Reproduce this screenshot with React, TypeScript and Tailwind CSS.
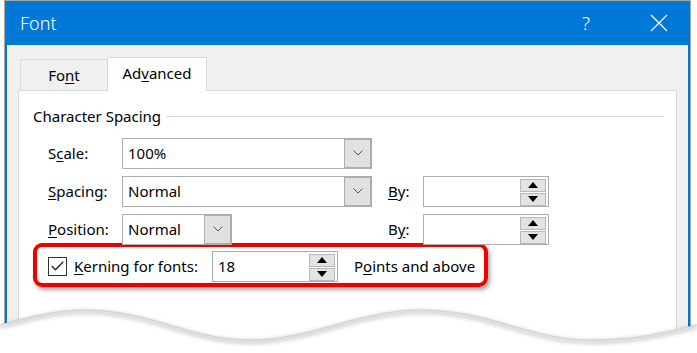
import React from 'react';

const font = { fontFamily: '"Noto Sans", "Open Sans", sans-serif' };

function Chevron() {
  return (
    <svg width="10" height="6" viewBox="0 0 10 6" className="text-[#555]">
      <path d="M0.5 0.5 L5 5 L9.5 0.5" fill="none" stroke="currentColor" strokeWidth="1" />
    </svg>
  );
}

function ComboBox({ value, width }: { value: string; width: string }) {
  return (
    <div className={`relative flex h-[31px] items-center border border-[#adadad] bg-white pl-[5px] ${width}`}>
      <span className="text-[15px] text-black">{value}</span>
      <div className="absolute right-0 top-0 flex h-[29px] w-[27px] items-center justify-center border border-[#adadad] bg-[#e1e1e1]">
        <Chevron />
      </div>
    </div>
  );
}

function Spinner() {
  return (
    <div className="absolute right-[2px] top-[2px] flex w-[26px] flex-col gap-[1px]">
      <div className="flex h-[13px] items-center justify-center border border-[#b8b8b8] bg-[#e3e3e3]">
        <svg width="10" height="6" viewBox="0 0 10 6">
          <path d="M0 6 L5 0 L10 6 Z" fill="#000" />
        </svg>
      </div>
      <div className="flex h-[13px] items-center justify-center border border-[#b8b8b8] bg-[#e3e3e3]">
        <svg width="10" height="6" viewBox="0 0 10 6">
          <path d="M0 0 L10 0 L5 6 Z" fill="#000" />
        </svg>
      </div>
    </div>
  );
}

function SpinBox({ value }: { value?: string }) {
  return (
    <div className="relative flex h-[31px] w-[126px] items-center border border-[#adadad] bg-white pl-[5px]">
      <span className="text-[15px] text-black">{value}</span>
      <Spinner />
    </div>
  );
}

export default function App() {
  return (
    <div className="relative h-[353px] w-[697px] overflow-hidden bg-white pl-[4px]" style={font}>
      <div className="flex h-[360px] w-[687px] flex-col border border-[#a6a6a6]">
        {/* title bar */}
        <div className="flex h-[44px] items-center bg-[#0078d7] pl-[15px] text-white">
          <span className="text-[18px] font-light">Font</span>
          <span className="ml-auto mr-[60px] text-[19px] font-light">?</span>
          <svg width="18" height="18" viewBox="0 0 18 18" className="mr-[22px]">
            <path d="M1 1 L17 17 M17 1 L1 17" stroke="#fff" strokeWidth="1.2" />
          </svg>
        </div>

        <div className="flex flex-1 flex-col border-x-2 border-[#0078d7] bg-[#f0f0f0]">
          {/* tabs */}
          <div className="flex items-end pl-[13px] pt-[12px]">
            <div className="flex h-[31px] w-[87px] items-center justify-center border-l border-t border-[#d9d9d9] text-[15px] text-black">
              Fo<u className="underline-offset-2">n</u>t
            </div>
            <div className="relative z-10 -mb-px flex h-[34px] w-[100px] items-center justify-center border-x border-t border-[#d9d9d9] bg-white pb-[2px] text-[15px] text-black">
              Ad<u className="underline-offset-2">v</u>anced
            </div>
          </div>

          {/* panel */}
          <div className="mx-[11px] flex-1 border border-[#d9d9d9] bg-white pl-[14px] pr-[12px] pt-[14px]">
            <div className="flex items-center gap-[5px]">
              <span className="text-[15px] text-black">Character Spacing</span>
              <div className="h-px flex-1 bg-[#dcdcdc]" />
            </div>

            <div className="mt-[10px] grid grid-cols-[74px_250px_16px_35px_126px] gap-y-[7px] pl-[15px]">
              <span className="flex items-center text-[15px] text-black">
                S<u className="underline-offset-2">c</u>ale:
              </span>
              <ComboBox value="100%" width="w-[250px]" />
              <span />
              <span />
              <span />

              <span className="flex items-center text-[15px] text-black">
                <u className="underline-offset-2">S</u>pacing:
              </span>
              <ComboBox value="Normal" width="w-[250px]" />
              <span />
              <span className="flex items-center text-[15px] text-black">
                <u className="underline-offset-2">B</u>y:
              </span>
              <SpinBox />

              <span className="flex items-center text-[15px] text-black">
                <u className="underline-offset-2">P</u>osition:
              </span>
              <ComboBox value="Normal" width="w-[110px]" />
              <span />
              <span className="flex items-center text-[15px] text-black">
                B<u className="underline-offset-2">y</u>:
              </span>
              <SpinBox />
            </div>

            {/* highlighted kerning row */}
            <div className="-mt-[2px] inline-flex h-[44px] items-center rounded-[9px] border-4 border-[#ee0000] pb-[1px] pl-[11px] pr-[9px] pt-[4px] shadow-[2px_3px_4px_rgba(0,0,0,0.35)]">
              <div className="flex h-[19px] w-[19px] items-center justify-center border border-[#333]">
                <svg width="13" height="10" viewBox="0 0 13 10">
                  <path d="M0.8 5 L4.5 8.8 L12.2 0.8" fill="none" stroke="#222" strokeWidth="1.3" />
                </svg>
              </div>
              <span className="ml-[7px] w-[138px] text-[15px] text-black">
                <u className="underline-offset-2">K</u>erning for fonts:
              </span>
              <SpinBox value="18" />
              <span className="ml-[16px] text-[15px] text-black">
                P<u className="underline-offset-2">o</u>ints and above
              </span>
            </div>
          </div>
        </div>
      </div>

      {/* torn paper edge */}
      <svg className="absolute left-0 top-[295px]" width="697" height="58" viewBox="0 0 697 58">
        <defs>
          <filter id="blur" x="-5%" y="-50%" width="110%" height="200%">
            <feGaussianBlur stdDeviation="2" />
          </filter>
        </defs>
        <path
          d="M0,30 C30,22 55,15 85,15 C150,15 190,45 250,45 C310,45 360,15 420,15 C490,15 530,45 590,45 C640,45 670,36 697,30 L697,58 L0,58 Z"
          fill="#fff"
        />
        <path
          d="M0,32 C30,24 55,17 85,17 C150,17 190,47 250,47 C310,47 360,17 420,17 C490,17 530,47 590,47 C640,47 670,38 697,32"
          fill="none"
          stroke="rgba(0,0,0,0.25)"
          strokeWidth="3"
          filter="url(#blur)"
        />
        <path
          d="M0,30 C30,22 55,15 85,15 C150,15 190,45 250,45 C310,45 360,15 420,15 C490,15 530,45 590,45 C640,45 670,36 697,30"
          fill="none"
          stroke="#d0d0d0"
          strokeWidth="1"
        />
      </svg>
    </div>
  );
}
